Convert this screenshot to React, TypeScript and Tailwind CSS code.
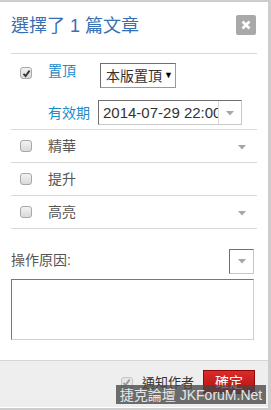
import React from "react";

const F = { fontFamily: '"Liberation Sans", "Noto Sans CJK TC", sans-serif' };

function Box({ checked = false, disabled = false }: { checked?: boolean; disabled?: boolean }) {
  return (
    <div
      className={`w-[12px] h-[12px] rounded-[3px] border flex items-center justify-center ${
        disabled ? "border-[#c4c4c4] bg-[#e6e6e6]" : "border-[#a8a8a8] bg-gradient-to-b from-[#f2f2f2] to-[#d9d9d9]"
      }`}
    >
      {checked && (
        <svg width="9" height="9" viewBox="0 0 9 9">
          <path d="M1.5 4.8 L3.6 7 L7.6 1.6" fill="none" stroke={disabled ? "#9a9a9a" : "#333"} strokeWidth="1.8" />
        </svg>
      )}
    </div>
  );
}

function Tri() {
  return (
    <svg width="8" height="5" viewBox="0 0 8 5">
      <path d="M0 0 L8 0 L4 4.5 Z" fill="#a6a6a6" />
    </svg>
  );
}

function OptRow({ label, arrow }: { label: string; arrow?: boolean }) {
  return (
    <div className="h-[33px] border-b border-[#d9d9d9] flex items-center">
      <div className="w-[37px] pl-[9px]">
        <Box />
      </div>
      <div className="flex-1 text-[14px] text-[#555] leading-none">{label}</div>
      {arrow && (
        <div className="pr-[11px] pt-[2px]">
          <Tri />
        </div>
      )}
    </div>
  );
}

export default function App() {
  return (
    <div className="w-[271px] h-[410px] bg-[#cdcdcd] overflow-hidden flex flex-col" style={F}>
      <div className="mt-[2px] w-[268px] h-[406px] bg-white flex flex-col">
        <div className="px-[11px] flex-1 flex flex-col">
          {/* header */}
          <div className="h-[52px] border-b border-[#d9d9d9] flex items-start justify-between pt-[13px]">
            <div className="text-[18px] text-[#3870b4] leading-[22px]">選擇了 1 篇文章</div>
            <div className="mr-[1px] w-[20px] h-[20px] bg-[#a9a9a9] rounded-[2px] flex items-center justify-center">
              <svg width="10" height="10" viewBox="0 0 10 10">
                <path d="M1.5 1.5 L8.5 8.5 M8.5 1.5 L1.5 8.5" stroke="#fff" strokeWidth="2.6" />
              </svg>
            </div>
          </div>
          {/* sticky section */}
          <div className="h-[76px] border-b border-[#d9d9d9] flex flex-col pt-[9px]">
            <div className="flex items-start h-[25px]">
              <div className="w-[37px] pl-[9px] pt-[4px]">
                <Box checked />
              </div>
              <div className="w-[52px] text-[14px] text-[#1a8ccc] leading-none pt-[1px]">置頂</div>
              <div className="w-[76px] h-[25px] border border-[#9a9a9a] border-t-[#6f6f6f] border-l-[#6f6f6f] flex items-center pl-[5px] pr-[2px] justify-between whitespace-nowrap">
                <span className="text-[14px] text-[#333] leading-none whitespace-nowrap">本版置頂</span>
                <span className="text-[9px] text-black leading-none">▼</span>
              </div>
            </div>
            <div className="flex items-center h-[25px] mt-[12px]">
              <div className="w-[37px]" />
              <div className="w-[50px] text-[14px] text-[#1a8ccc] leading-none">有效期</div>
              <div className="w-[144px] h-[25px] border border-[#c8c8c8] border-t-[#6f6f6f] border-l-[#6f6f6f] flex">
                <div className="w-[120px] overflow-hidden whitespace-nowrap text-[15px] text-[#333] leading-[23px] pl-[4px] border-r border-[#d9d9d9]">
                  2014-07-29 22:00
                </div>
                <div className="flex-1 flex items-center justify-center pt-[1px]">
                  <Tri />
                </div>
              </div>
            </div>
          </div>
          <OptRow label="精華" arrow />
          <OptRow label="提升" />
          <OptRow label="高亮" arrow />
          {/* reason */}
          <div className="flex items-start justify-between mt-[20px] pr-[3px]">
            <div className="text-[14px] text-[#555] leading-none pt-[4px]">操作原因:</div>
            <div className="w-[25px] h-[25px] border border-[#c8c8c8] border-t-[#6f6f6f] border-l-[#6f6f6f] flex items-center justify-center">
              <Tri />
            </div>
          </div>
          <div className="mt-[5px] mr-[3px] h-[61px] border border-[#cfcfcf] border-t-[#777] border-l-[#777]" />
        </div>
        {/* footer */}
        <div className="mt-[20px] h-[47px] bg-[#eeeeee] border-t border-[#d6d6d6] flex items-start justify-end pr-[13px] pt-[9px] relative">
          <div className="flex items-center mt-[6px] mr-[9px]">
            <Box checked disabled />
            <span className="ml-[9px] text-[13px] text-[#333] leading-none">通知作者</span>
          </div>
          <div className="w-[52px] h-[24px] bg-gradient-to-b from-[#dc2a2a] to-[#b50d0d] border border-[#8e0a0a] flex items-center justify-center text-[14px] text-white leading-none">
            確定
          </div>
          <div className="absolute left-[116px] top-[24px] w-[150px] h-[19px] bg-[rgba(70,70,70,0.78)] flex items-center justify-center text-[14px] text-[#e6e6e6] leading-none whitespace-nowrap">
            捷克論壇 JKForuM.Net
          </div>
        </div>
        <div className="h-[1px] bg-white" />
      </div>
    </div>
  );
}
